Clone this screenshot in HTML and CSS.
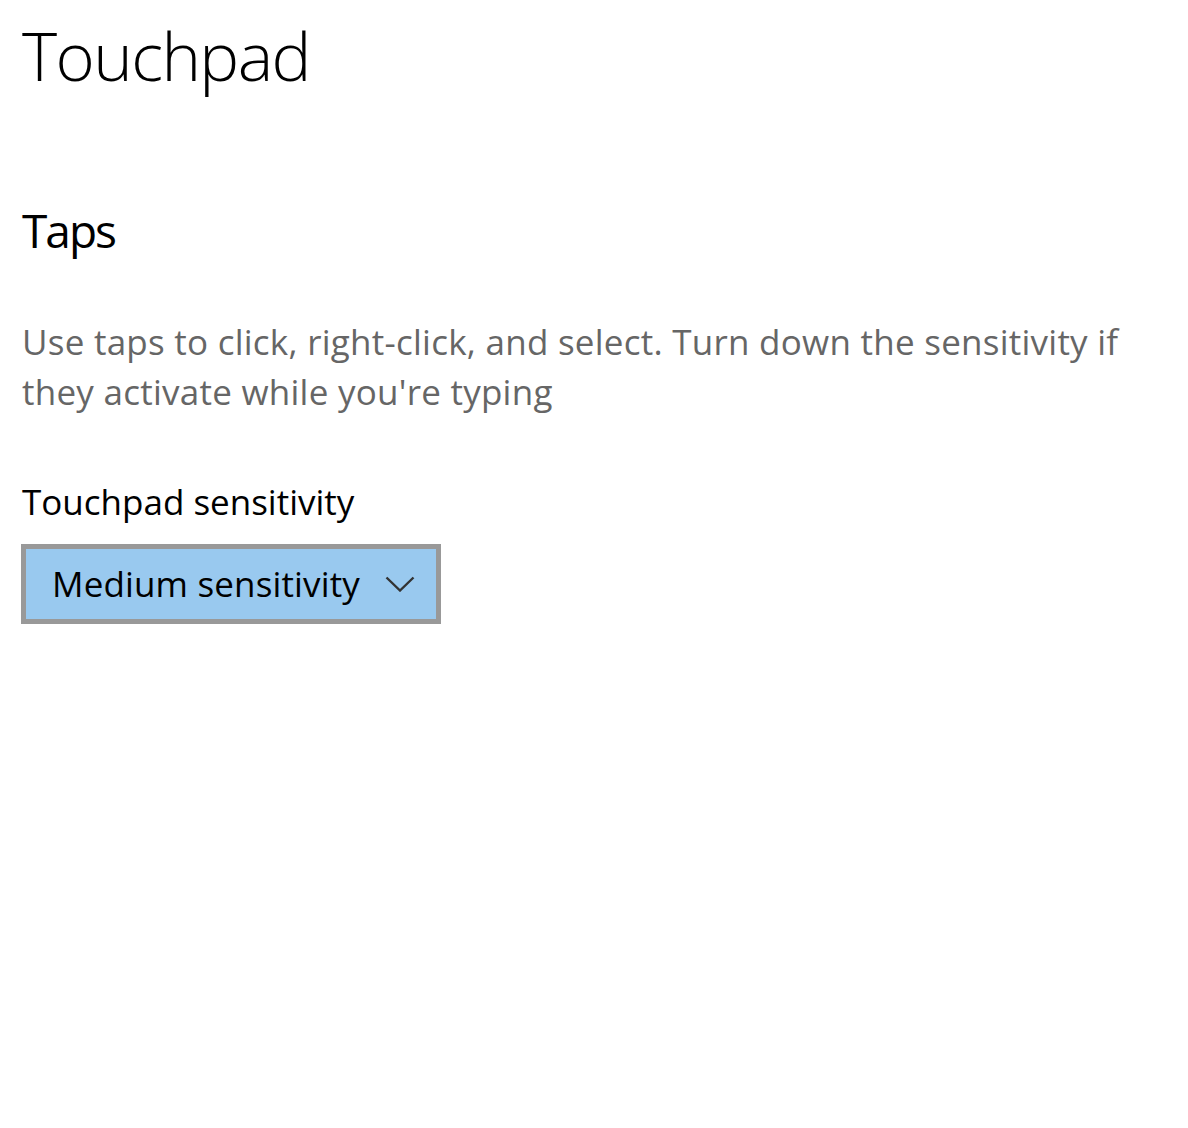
FILE: index.html
```html
<!DOCTYPE html>
<html lang="en">
<head>
<meta charset="utf-8">
<title>Touchpad</title>
<link rel="stylesheet" href="styles.css">
</head>
<body>
<main class="page">
  <h1 class="title">Touchpad</h1>
  <section class="group">
    <h2 class="subtitle">Taps</h2>
    <p class="desc">Use taps to click, right-click, and select. Turn down the sensitivity if they activate while you're typing</p>
    <div class="field">
      <label class="label">Touchpad sensitivity</label>
      <div class="combo">
        <span class="combo-text">Medium sensitivity</span>
        <svg class="chevron" width="30" height="16" viewBox="0 0 30 16" aria-hidden="true">
          <polyline points="1.5,1.5 15,14.5 28.5,1.5" fill="none" stroke="#333" stroke-width="2.4"/>
        </svg>
      </div>
    </div>
  </section>
</main>
</body>
</html>
```
FILE: styles.css
```css
html, body {
  margin: 0;
  padding: 0;
  background: #ffffff;
}
body {
  font-family: "Open Sans", "Noto Sans", "Liberation Sans", sans-serif;
  color: #000;
}
.page {
  padding: 0 22px;
  width: 1120px;
}
.title {
  margin: 0;
  padding-top: 9px;
  font-size: 67px;
  font-weight: 300;
  line-height: 92px;
  letter-spacing: -1.6px;
}
.group {
  margin-top: 96px;
}
.subtitle {
  margin: 0;
  font-size: 46px;
  font-weight: 400;
  line-height: 66px;
  letter-spacing: -2px;
}
.desc {
  margin: 54px 0 0;
  font-size: 35px;
  line-height: 50px;
  color: #666;
  letter-spacing: 0.25px;
}
.field {
  margin-top: 60px;
  display: flex;
  flex-direction: column;
  align-items: flex-start;
}
.label {
  font-size: 35px;
  line-height: 50px;
}
.combo {
  margin-top: 17px;
  margin-left: -1px;
  box-sizing: border-box;
  width: 420px;
  height: 80px;
  border: 5px solid #999999;
  background: #99c9ef;
  display: flex;
  align-items: center;
  justify-content: space-between;
  padding: 0 21px 0 26px;
}
.combo-text {
  font-size: 35px;
  line-height: 50px;
  letter-spacing: 0.15px;
}
.chevron {
  display: block;
}
```
